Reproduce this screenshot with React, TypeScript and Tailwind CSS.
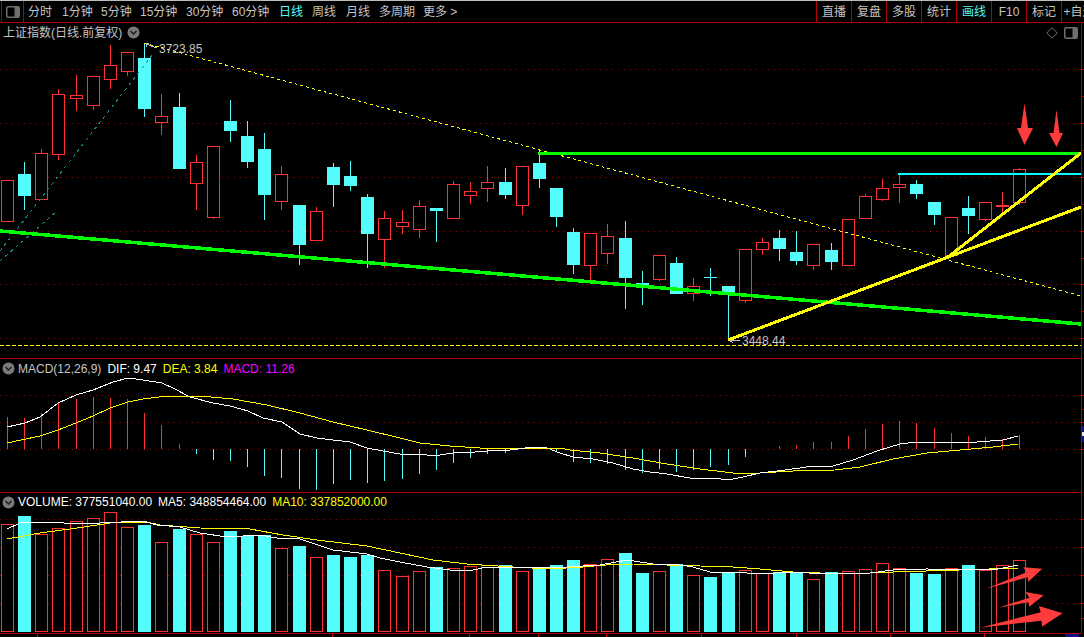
const RED = '#ff3232';
const CYAN = '#54fcfc';
const YELLOW = '#ffff00';
const GREEN = '#00ff00';
const GRID = '#8a0c0c';

const leftTabs: [string, string][] = [
  ['分时', 'w-[34px]'],
  ['1分钟', 'w-[39px]'],
  ['5分钟', 'w-[39px]'],
  ['15分钟', 'w-[46px]'],
  ['30分钟', 'w-[46px]'],
  ['60分钟', 'w-[47px]'],
  ['日线', 'w-[33px]'],
  ['周线', 'w-[34px]'],
  ['月线', 'w-[33px]'],
  ['多周期', 'w-[44px]'],
  ['更多 >', 'w-[36px]'],
];
const rightTabs = ['直播', '复盘', '多股', '统计', '画线', 'F10', '标记', '+自选'];

// left, body top, body bottom, high, low, up (red), volume bar top
type Candle = [number, number, number, number, number, boolean, number];

const candles: Candle[] = [
  [1, 180, 221, 180, 222, true, 524],
  [18, 174, 196, 162, 210, false, 516],
  [35, 153, 199, 149, 199, true, 534],
  [52, 94, 154, 89, 160, true, 528],
  [70, 95, 98, 75, 111, true, 521],
  [87, 76, 105, 76, 110, true, 518],
  [104, 65, 79, 45, 89, true, 512],
  [121, 52, 71, 52, 76, true, 527],
  [138, 58, 109, 43, 117, false, 525],
  [155, 116, 122, 94, 135, true, 542],
  [173, 107, 169, 93, 169, false, 529],
  [190, 162, 183, 155, 210, true, 534],
  [207, 146, 217, 146, 219, true, 542],
  [224, 121, 131, 100, 142, false, 531],
  [241, 136, 162, 121, 168, false, 536],
  [258, 149, 195, 133, 220, false, 535],
  [275, 174, 201, 166, 210, true, 548],
  [293, 205, 245, 205, 265, false, 546],
  [310, 211, 240, 207, 240, true, 557],
  [327, 167, 185, 163, 207, false, 555],
  [344, 176, 186, 161, 191, false, 557],
  [361, 197, 234, 194, 268, false, 555],
  [378, 218, 239, 211, 268, true, 570],
  [396, 222, 226, 210, 234, true, 576],
  [413, 206, 229, 200, 238, true, 571],
  [430, 208, 211, 208, 242, false, 567],
  [447, 184, 218, 181, 219, true, 568],
  [464, 191, 195, 182, 204, true, 566],
  [481, 182, 188, 166, 202, true, 565],
  [499, 182, 195, 168, 199, false, 565],
  [516, 166, 205, 166, 215, true, 571],
  [533, 163, 179, 150, 188, false, 567],
  [550, 188, 217, 188, 227, false, 565],
  [567, 232, 265, 228, 274, false, 560],
  [584, 233, 265, 233, 281, true, 564],
  [601, 236, 253, 224, 264, true, 559],
  [619, 238, 278, 221, 309, false, 553],
  [636, 283, 285, 271, 305, false, 573],
  [653, 255, 279, 255, 281, true, 571],
  [670, 263, 294, 257, 294, false, 564],
  [687, 286, 293, 278, 301, true, 575],
  [704, 277, 278, 268, 296, false, 577],
  [722, 286, 295, 286, 340, false, 572],
  [739, 249, 300, 249, 303, true, 570],
  [756, 242, 249, 238, 255, true, 573],
  [773, 238, 249, 230, 261, false, 572],
  [790, 252, 261, 231, 265, false, 572],
  [807, 244, 265, 244, 270, true, 579],
  [825, 250, 262, 243, 270, false, 572],
  [842, 219, 265, 219, 265, true, 571],
  [859, 196, 218, 194, 218, true, 569],
  [876, 188, 199, 179, 201, true, 563],
  [893, 184, 187, 175, 203, true, 568],
  [910, 184, 194, 180, 199, false, 573],
  [928, 202, 215, 202, 225, false, 574],
  [945, 217, 255, 217, 255, true, 568],
  [962, 208, 216, 196, 234, false, 565],
  [979, 202, 219, 202, 221, true, 570],
  [996, 205, 206, 192, 212, true, 565],
  [1013, 169, 202, 168, 205, true, 560],
];

const macdBars: [number, number][] = [
  [7, 417], [24, 418], [41, 413], [58, 403], [76, 399], [93, 397], [110, 398], [127, 399], [144, 413], [161, 425], [179, 444],
  [196, 454], [213, 460], [230, 461], [247, 467], [264, 476], [281, 478], [299, 489], [316, 490], [333, 484], [350, 480], [367, 483], [384, 481],
  [402, 479], [419, 474], [436, 470], [453, 463], [470, 458], [487, 454], [505, 453], [522, 448], [556, 451],
  [573, 462], [590, 463], [607, 464], [625, 470], [642, 473], [659, 469], [676, 472], [693, 470], [710, 467], [728, 465], [745, 457],
  [779, 446], [796, 445], [813, 442], [831, 442], [848, 436], [865, 429], [882, 424], [899, 421], [916, 423], [934, 428], [951, 433], [968, 436], [985, 437], [1002, 439], [1019, 435],
];

const difLine = '7,427 25,423 40,417 58,403 76,395 93,390 113,382 128,378 143,380 162,383 173,388 190,397 213,403 230,406 248,411 263,418 282,422 300,434 317,438 333,440 350,442 367,448 383,451 400,454 427,455 440,455 453,453 475,452 487,451 510,450 533,447 547,448 560,453 573,457 593,459 613,463 633,469 650,472 667,474 690,478 713,478 728,480 743,477 760,473 777,471 800,468 812,466 833,466 853,460 877,451 900,444 917,442 943,442 977,442 1003,440 1018,436';
const deaLine = '7,443 40,436 58,430 76,423 93,416 110,408 128,402 143,399 167,396 200,396 233,399 267,405 300,413 333,422 367,430 400,438 420,443 450,446 480,448 560,448 570,450 600,453 633,458 667,464 700,469 733,473 760,473 793,471 835,470 860,467 893,459 927,453 960,450 993,447 1018,444';
const ma5Line = '7,529 20,523 50,522 58,522 70,524 100,523 143,521 157,525 180,527 200,533 227,537 260,535 277,538 300,539 333,550 367,554 380,558 400,562 427,567 450,570 473,570 487,567 513,567 567,567 600,565 627,560 653,564 680,565 693,567 710,572 733,572 760,574 790,572 827,574 870,573 893,570 927,569 993,570 1018,565';
const ma10Line = '7,539 40,533 77,528 117,522 147,522 160,525 200,528 250,529 283,535 317,540 367,546 400,553 433,560 467,564 513,567 550,569 583,567 617,564 633,564 700,566 733,567 760,569 793,572 820,573 870,573 893,572 960,570 1018,568';

function GridLines({ ys }: { ys: number[] }) {
  return (
    <>
      {ys.map((y) => (
        <line key={y} x1={0} x2={1081} y1={y + 0.5} y2={y + 0.5} stroke={GRID} strokeDasharray="1 5" />
      ))}
    </>
  );
}

function Chevron() {
  return (
    <svg width="13" height="13" viewBox="0 0 13 13" className="shrink-0">
      <circle cx="6.5" cy="6.5" r="6" fill="#7a7a7a" />
      <path d="M3.5 5 L6.5 8 L9.5 5" fill="none" stroke="#1c1c1c" strokeWidth="1.4" />
    </svg>
  );
}

function PanelIcon({ size = 14 }: { size?: number }) {
  return (
    <svg width={size} height={size - 2} viewBox="0 0 14 12">
      <rect x="0.75" y="0.75" width="12.5" height="10.5" rx="1.5" fill="none" stroke="#6f6f6f" strokeWidth="1.5" />
      <rect x="8.5" y="1" width="4.5" height="10" fill="#6f6f6f" />
    </svg>
  );
}

function MainChart() {
  return (
    <svg width={1081} height={316} viewBox="0 42 1081 316" className="block">
      <GridLines ys={[69, 123, 177, 231, 284, 338]} />
      <g shapeRendering="crispEdges">
        {candles.map(([x, top, bottom, high, low, up]) => {
          const color = up ? RED : CYAN;
          return (
            <g key={x}>
              <rect x={x + 6} y={high} width={1} height={low - high} fill={color} />
              {up ? (
                <rect x={x + 0.5} y={top + 0.5} width={12} height={bottom - top} fill="#000" stroke={color} />
              ) : (
                <rect x={x} y={top} width={13} height={bottom - top} fill={color} />
              )}
            </g>
          );
        })}
      </g>
      <g fill="none" shapeRendering="crispEdges">
        <line x1={0} y1={251} x2={153} y2={54} stroke="#0e8f8f" strokeDasharray="3 4" />
        <line x1={0} y1={261} x2={57} y2={211} stroke="#0e8f8f" strokeDasharray="3 4" />
        <line x1={144} y1={43} x2={1081} y2={296} stroke={YELLOW} strokeDasharray="3 3" />
        <line x1={0} y1={345.5} x2={1081} y2={345.5} stroke={YELLOW} strokeDasharray="4 2" />
        <line x1={0} y1={231} x2={1081} y2={324} stroke={GREEN} strokeWidth={3.5} />
        <line x1={538} y1={153.5} x2={1081} y2={153.5} stroke={GREEN} strokeWidth={3} />
        <line x1={898} y1={174} x2={1081} y2={174} stroke="#00ffff" strokeWidth={2} />
        <line x1={728} y1={340} x2={1081} y2={207} stroke={YELLOW} strokeWidth={3} />
        <line x1={948} y1={257} x2={1081} y2={153} stroke={YELLOW} strokeWidth={3} />
        <path d="M146 44 L157 48 M146 44 L146 47 M146 44 L149 43" stroke="#c4c4c4" />
        <path d="M730 340.5 L740 340.5 M730 340.5 L733 343" stroke="#c4c4c4" />
      </g>
      <g fill="#c4c4c4" fontSize="12" fontFamily="Liberation Sans, sans-serif">
        <text x={159} y={53}>3723.85</text>
        <text x={742} y={345}>3448.44</text>
      </g>
      <g fill="#ff3c3c">
        <polygon points="1024.5,103 1028,128 1033,128 1024.5,145 1017,128 1021,128" />
        <polygon points="1056.5,110 1059.5,133 1063,133 1056.5,147 1049,133 1053.5,133" />
      </g>
    </svg>
  );
}

function MacdChart() {
  return (
    <svg width={1081} height={114} viewBox="0 378 1081 114" className="block">
      <GridLines ys={[395, 422, 449]} />
      <g shapeRendering="crispEdges">
        {macdBars.map(([x, end]) => (
          <rect
            key={x}
            x={x}
            y={Math.min(end, 449)}
            width={1}
            height={Math.abs(end - 449) || 1}
            fill={end < 449 ? RED : CYAN}
          />
        ))}
        <polyline points={deaLine} fill="none" stroke={YELLOW} />
        <polyline points={difLine} fill="none" stroke="#ffffff" />
      </g>
    </svg>
  );
}

function VolumeChart() {
  return (
    <svg width={1081} height={122} viewBox="0 511 1081 122" className="block">
      <GridLines ys={[519, 547, 575, 603]} />
      <g shapeRendering="crispEdges">
        {candles.map(([x, , , , , up, volTop]) =>
          up ? (
            <rect key={x} x={x + 0.5} y={volTop + 0.5} width={12} height={632 - volTop - 1} fill="#000" stroke={RED} />
          ) : (
            <rect key={x} x={x} y={volTop} width={13} height={632 - volTop} fill={CYAN} />
          ),
        )}
        <polyline points={ma10Line} fill="none" stroke={YELLOW} />
        <polyline points={ma5Line} fill="none" stroke="#ffffff" />
      </g>
      <g transform="translate(760 490) scale(0.3333)" fill="#ff3c3c">
        <polygon points="678,296 800,247 790,232 847,236 805,275 803,262" />
        <polygon points="715,353 808,323 797,306 851,316 808,350 805,337" />
        <polygon points="660,413 842,367 837,348 908,370 846,410 845,392" />
      </g>
    </svg>
  );
}

function RightAxis() {
  const ticks = [69, 96, 123, 150, 177, 204, 231, 258, 284, 311, 338, 395, 409, 422, 449, 519, 547, 575, 603, 618];
  return (
    <svg width={2} height={610} viewBox="0 23 2 610" className="block">
      {ticks.map((y) => (
        <rect key={y} x={0} y={y} width={2} height={1} fill="#b00000" />
      ))}
      <rect x={0} y={426} width={2} height={16} fill="#10108a" />
      <rect x={0} y={432} width={2} height={4} fill="#e8e8e8" />
    </svg>
  );
}

function BottomAxis() {
  const ticks = [37, 332, 469, 538, 606, 701, 796, 890, 984];
  return (
    <svg width={1084} height={3} viewBox="0 634 1084 3" className="block">
      {ticks.map((x) => (
        <rect key={x} x={x} y={634} width={1} height={3} fill="#d01010" />
      ))}
      <rect x={1065} y={634} width={14} height={3} fill="#10108a" />
    </svg>
  );
}

export default function App() {
  return (
    <div className="w-[1084px] h-[637px] bg-black overflow-hidden flex flex-col text-xs leading-none font-[Liberation_Sans,Noto_Sans_CJK_SC,sans-serif]">
      <div className="h-px shrink-0 bg-[#bdbdbd]" />

      {/* toolbar */}
      <div className="h-[22px] shrink-0 flex border-b border-[#b00000] text-[#c4c4c4]">
        <div className="w-[816px] shrink-0 flex items-center">
          <div className="ml-px w-[23px] h-full flex items-center justify-center border-x border-[#b00000]">
            <PanelIcon />
          </div>
          <div className="ml-1 flex items-center whitespace-nowrap">
            {leftTabs.map(([tab, width]) => (
              <span key={tab} className={`${width} ${tab === '日线' ? 'text-[#54fcfc]' : ''}`}>
                {tab}
              </span>
            ))}
          </div>
        </div>
        <div className="flex">
          {rightTabs.map((tab) => (
            <div
              key={tab}
              className={`w-[35px] shrink-0 flex items-center justify-center whitespace-nowrap border-l border-[#b00000] ${
                tab === '画线' ? 'text-[#54fcfc]' : ''
              }`}
            >
              {tab}
            </div>
          ))}
        </div>
      </div>

      <div className="flex shrink-0">
        <div className="w-[1081px] shrink-0 flex flex-col">
          {/* main chart */}
          <div className="relative border-b border-[#b00000]">
            <div className="h-[19px] pl-[3px] flex items-center gap-[5px] text-[#c4c4c4]">
              <span>上证指数(日线.前复权)</span>
              <Chevron />
            </div>
            <div className="absolute right-[3px] top-[4px] flex items-center gap-[6px]">
              <svg width="12" height="12" viewBox="0 0 12 12">
                <path d="M6 0.7 L11.3 6 L6 11.3 L0.7 6 Z" fill="none" stroke="#6f6f6f" />
              </svg>
              <PanelIcon />
            </div>
            <MainChart />
          </div>

          {/* MACD */}
          <div className="border-b border-[#b00000]">
            <div className="h-[19px] pl-[2px] flex items-center gap-[6px] whitespace-nowrap">
              <Chevron />
              <span className="-ml-[3px] text-[#c4c4c4]">MACD(12,26,9)</span>
              <span className="text-white">DIF: 9.47</span>
              <span className="text-[#ffff00]">DEA: 3.84</span>
              <span className="text-[#ff00ff]">MACD: 11.26</span>
            </div>
            <MacdChart />
          </div>

          {/* volume */}
          <div className="border-b border-[#b00000]">
            <div className="h-[18px] pl-[2px] flex items-center gap-[6px] whitespace-nowrap">
              <Chevron />
              <span className="-ml-[3px] text-white">VOLUME: 377551040.00</span>
              <span className="text-white">MA5: 348854464.00</span>
              <span className="text-[#ffff00]">MA10: 337852000.00</span>
            </div>
            <VolumeChart />
          </div>
        </div>
        <div className="w-[3px] shrink-0 border-l border-[#b00000]">
          <RightAxis />
        </div>
      </div>

      <BottomAxis />
    </div>
  );
}
